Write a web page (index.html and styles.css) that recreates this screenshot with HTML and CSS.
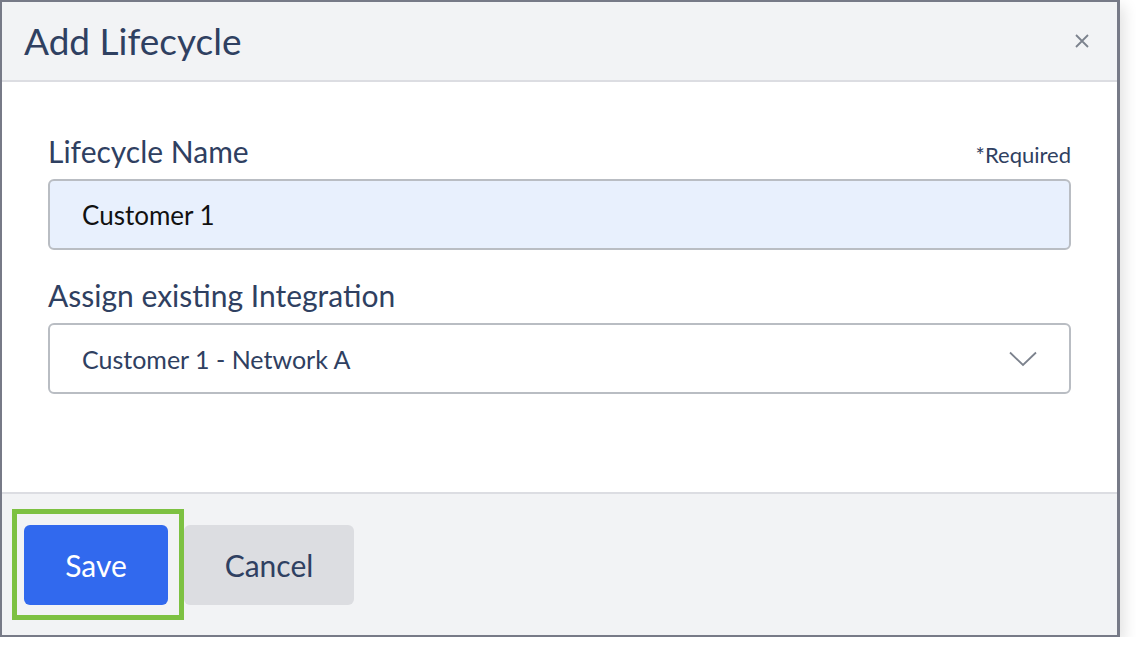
FILE: index.html
```html
<!DOCTYPE html>
<html lang="en">

<head>
    <meta charset="UTF-8">
    <meta name="viewport" content="width=device-width, initial-scale=1.0">
    <title>Add Lifecycle</title>
    <link rel="stylesheet" href="styles.css">
</head>

<body>

    <div class="modal">
        <div class="modal-header">
            <h2>Add Lifecycle</h2>
            <button class="close-btn" type="button" aria-label="Close">
                <svg width="14" height="14" viewBox="0 0 14 14">
                    <path d="M1 1 L13 13 M13 1 L1 13" stroke="#7c828d" stroke-width="1.8" fill="none" />
                </svg>
            </button>
        </div>

        <form class="modal-body">
            <div class="field">
                <div class="field-top">
                    <label for="lcname">Lifecycle Name</label>
                    <span class="required">*Required</span>
                </div>
                <input type="text" id="lcname" class="text-input" value="Customer 1">
            </div>

            <div class="field">
                <div class="field-top">
                    <label for="integration">Assign existing Integration</label>
                </div>
                <div class="select-box" id="integration">
                    <span>Customer 1 - Network A</span>
                    <svg width="28" height="16" viewBox="0 0 28 16">
                        <path d="M1 1.5 L14 14 L27 1.5" stroke="#7c828d" stroke-width="1.8" fill="none" />
                    </svg>
                </div>
            </div>
        </form>

        <div class="modal-footer">
            <span class="highlight">
                <button class="btn btn-save" type="button">Save</button>
            </span>
            <button class="btn btn-cancel" type="button">Cancel</button>
        </div>
    </div>

</body>

</html>
```

FILE: styles.css
```css
body {
    margin: 0;
    background: #ffffff;
    font-family: Lato, "Open Sans", sans-serif;
    color: #2f4061;
}

.modal {
    width: 1120px;
    height: 637px;
    box-sizing: border-box;
    border: 2px solid #777a87;
    border-right-width: 3px;
    display: flex;
    flex-direction: column;
    background: #ffffff;
    box-shadow: 4px 6px 14px rgba(0, 0, 0, 0.12);
}

/* header */
.modal-header {
    height: 80px;
    box-sizing: border-box;
    flex-shrink: 0;
    display: flex;
    align-items: center;
    justify-content: space-between;
    padding: 0 28px 2px 22px;
    background: #f2f3f5;
    border-bottom: 2px solid #dcdde2;
}

.modal-header h2 {
    margin: 0;
    font-size: 37px;
    font-weight: 400;
    color: #2f4061;
}

.close-btn {
    border: none;
    background: none;
    padding: 0;
    margin-top: 2px;
    display: flex;
    cursor: pointer;
}

/* form */
.modal-body {
    flex: 1;
    padding: 52px 46px 0 46px;
}

.field {
    margin-bottom: 28px;
}

.field-top {
    display: flex;
    justify-content: space-between;
    align-items: baseline;
    margin-bottom: 11px;
}

.field-top label {
    font-size: 30px;
    line-height: 34px;
}

.required {
    font-size: 22px;
}

.text-input,
.select-box {
    width: 100%;
    height: 71px;
    box-sizing: border-box;
    border: 2px solid #b9bdc3;
    border-radius: 6px;
    padding: 0 32px;
    font-family: inherit;
    font-size: 26px;
}

.text-input {
    background: #e8f0fd;
    color: #111111;
    outline: none;
}

.select-box {
    display: flex;
    align-items: center;
    justify-content: space-between;
    background: #ffffff;
    color: #2f4061;
    font-size: 25px;
}

/* footer */
.modal-footer {
    height: 141px;
    flex-shrink: 0;
    display: flex;
    align-items: center;
    padding-left: 10px;
    background: #f2f3f5;
    border-top: 2px solid #dcdde2;
}

.highlight {
    display: flex;
    padding: 11px 11px 10px 7px;
    border: 5px solid #7dc142;
}

.btn {
    height: 80px;
    border: none;
    border-radius: 6px;
    font-family: inherit;
    font-size: 30px;
    cursor: pointer;
}

.btn-save {
    width: 144px;
    background: #3169ee;
    color: #ffffff;
}

.btn-cancel {
    width: 170px;
    background: #dcdde1;
    color: #2f4061;
}
```
